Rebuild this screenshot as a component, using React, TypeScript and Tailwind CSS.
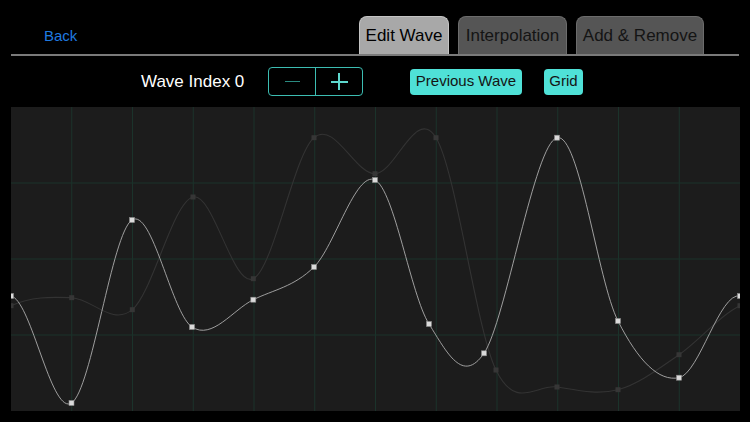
import React from "react";

type P = [number, number];
const W = 729;
const H = 304;

const mainPts: P[] = [
  [0, 189], [60.5, 296], [121, 113], [181, 220], [242.3, 192.7], [303, 160],
  [364, 73], [418, 217], [473, 246.3], [546, 30.7], [607, 214], [668, 270.7], [729, 189],
];
const prevPts: P[] = [
  [0, 198.7], [60.7, 190.7], [121.3, 202.7], [182, 90], [242.3, 171.7], [303, 30.7],
  [364, 66.7], [425, 30.7], [485, 263], [546, 280], [607, 282.7], [668, 247.7], [729, 198.7],
];

function splinePath(pts: P[]): string {
  const n = pts.length;
  const get = (i: number): P => {
    if (i < 0) {
      const p = pts[n - 1 + i];
      return [p[0] - W, p[1]];
    }
    if (i >= n) {
      const p = pts[i - n + 1];
      return [p[0] + W, p[1]];
    }
    return pts[i];
  };
  let d = `M ${pts[0][0]} ${pts[0][1]}`;
  for (let i = 0; i < n - 1; i++) {
    const p0 = get(i - 1);
    const p1 = get(i);
    const p2 = get(i + 1);
    const p3 = get(i + 2);
    const c1: P = [p1[0] + (p2[0] - p0[0]) / 6, p1[1] + (p2[1] - p0[1]) / 6];
    const c2: P = [p2[0] - (p3[0] - p1[0]) / 6, p2[1] - (p3[1] - p1[1]) / 6];
    d += ` C ${c1[0].toFixed(2)} ${c1[1].toFixed(2)} ${c2[0].toFixed(2)} ${c2[1].toFixed(2)} ${p2[0]} ${p2[1]}`;
  }
  return d;
}

function Graph() {
  const vx = Array.from({ length: 11 }, (_, i) => ((i + 1) * W) / 12);
  const hy = [76, 152, 228];
  return (
    <div className="mx-[11px] mt-[11px] h-[304px] w-[729px] overflow-hidden bg-[#1c1c1c]">
      <svg width={W} height={H} viewBox={`0 0 ${W} ${H}`} className="block">
        {vx.map((x) => (
          <line key={"v" + x} x1={x} y1={0} x2={x} y2={H} stroke="#1b332b" strokeWidth={1} />
        ))}
        {hy.map((y) => (
          <line key={"h" + y} x1={0} y1={y} x2={W} y2={y} stroke="#1b332b" strokeWidth={1} />
        ))}
        <path d={splinePath(prevPts)} fill="none" stroke="#333333" strokeWidth={1.1} />
        {prevPts.map((p, i) => (
          <rect key={"pp" + i} x={p[0] - 2.5} y={p[1] - 2.5} width={5} height={5} fill="#363636" />
        ))}
        <path d={splinePath(mainPts)} fill="none" stroke="#adadad" strokeWidth={0.9} />
        {mainPts.map((p, i) => (
          <rect
            key={"mp" + i}
            x={p[0] - 2.5}
            y={p[1] - 2.5}
            width={5}
            height={5}
            fill="#dadada"
            stroke="#8a8a8a"
            strokeWidth={0.6}
          />
        ))}
      </svg>
    </div>
  );
}

function Tab({ label, active, w }: { label: string; active?: boolean; w: string }) {
  return (
    <div
      className={
        "flex h-[38px] items-center justify-center rounded-t-[8px] border border-b-0 pt-[1px] text-[17px] " +
        w +
        " " +
        (active
          ? "border-[#c4c4c4] bg-[#a8a8a8] text-black"
          : "border-[#6c6c6c] bg-[#555555] text-[#141414]")
      }
    >
      {label}
    </div>
  );
}

export default function App() {
  return (
    <div className="h-[422px] w-[750px] overflow-hidden bg-black font-['Liberation_Sans',Arial,sans-serif]">
      <div className="mx-[11px] flex h-[56px] items-end border-b-2 border-[#7a7a7a]">
        <div className="flex h-[38px] w-[348px] items-center pl-[33px] pt-[2px] text-[15px] text-[#1f7ae0]">
          Back
        </div>
        <div className="flex items-end gap-[9px]">
          <Tab label="Edit Wave" active w="w-[90px]" />
          <Tab label="Interpolation" w="w-[109px]" />
          <Tab label="Add & Remove" w="w-[128px]" />
        </div>
      </div>

      <div className="mt-[11px] flex h-[29px] items-center pl-[141px]">
        <div className="w-[127px] text-[17px] text-white">Wave Index 0</div>
        <div className="flex h-[29px] w-[95px] rounded-[4px] border-[1.5px] border-[#3cbdb2]">
          <div className="flex flex-1 items-center justify-center border-r-[1.5px] border-[#3cbdb2]">
            <div className="h-[1.5px] w-[15px] bg-[#2a8a80]" />
          </div>
          <div className="relative flex flex-1 items-center justify-center">
            <div className="h-[2px] w-[17px] bg-[#5ed8cd]" />
            <div className="absolute h-[17px] w-[2px] bg-[#5ed8cd]" />
          </div>
        </div>
        <div className="ml-[47px] flex h-[26px] w-[112px] items-center justify-center rounded-[4px] bg-[#4fe1d7] text-[15px] text-[#141414]">
          Previous Wave
        </div>
        <div className="ml-[22px] flex h-[26px] w-[39px] items-center justify-center rounded-[4px] bg-[#4fe1d7] text-[15px] text-[#141414]">
          Grid
        </div>
      </div>

      <Graph />
    </div>
  );
}
